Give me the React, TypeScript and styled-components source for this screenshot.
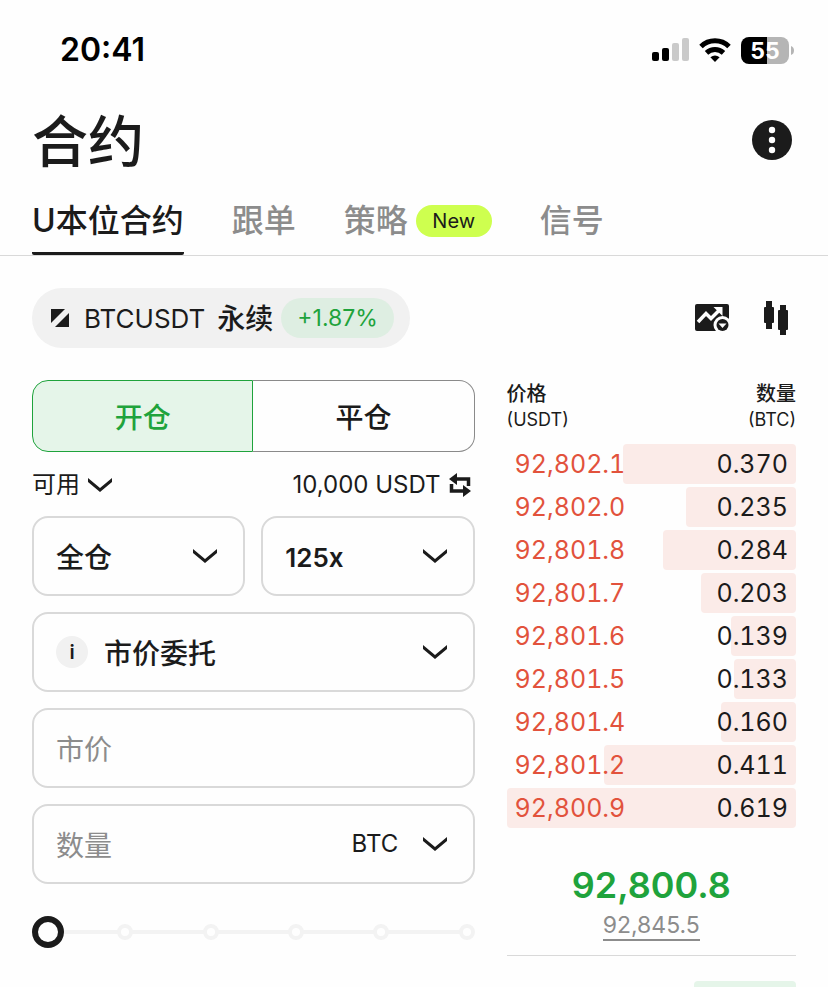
import React, { useState } from "react";
import styled, { createGlobalStyle, css } from "styled-components";

const INK = "#1b1b1b";
const MUTED = "#8c8c8c";
const GREEN = "#1fa33c";
const RED = "#e2523c";
const LINE = "#d9d9d9";

const GlobalStyle = createGlobalStyle`
  *, *::before, *::after { box-sizing: border-box; }
  body {
    margin: 0;
    background: #fefefe;
    color: ${INK};
    font-family: Inter, "Noto Sans CJK SC", sans-serif;
  }
  button, input, select {
    margin: 0;
    padding: 0;
    border: 0;
    background: none;
    color: inherit;
    font: inherit;
  }
  button, select { cursor: pointer; }
  svg { display: block; flex: none; }
`;

const Screen = styled.div`
  height: 100vh;
  overflow: hidden;
`;

const StatusBar = styled.div`
  display: flex;
  align-items: center;
  justify-content: space-between;
  height: 100px;
  padding: 0 34px 0 60px;
  color: #000;
`;

const Clock = styled.time`
  font-size: 32px;
  line-height: 40px;
  font-weight: 600;
`;

const StatusIcons = styled.div`
  display: flex;
  align-items: center;
  gap: 10px;
`;

const TitleBar = styled.header`
  display: flex;
  align-items: center;
  justify-content: space-between;
  height: 80px;
  padding: 0 36px 0 32px;
`;

const Title = styled.h1`
  margin: 0;
  padding-top: 4px;
  font-size: 56px;
  line-height: 80px;
  font-weight: 500;
`;

const IconButton = styled.button`
  display: flex;
  align-items: center;
  justify-content: center;
`;

const Tabs = styled.nav`
  display: flex;
  gap: 48px;
  height: 76px;
  padding: 0 32px;
  border-bottom: 1px solid ${LINE};
`;

const Tab = styled.a<{ $active?: boolean }>`
  display: flex;
  align-items: center;
  gap: 8px;
  padding-top: 10px;
  border-bottom: 3px solid ${(p) => (p.$active ? INK : "transparent")};
  border-radius: 2px;
  color: ${(p) => (p.$active ? INK : MUTED)};
  font-size: 32px;
  line-height: 40px;
  font-weight: 500;
  text-decoration: none;
  white-space: nowrap;
`;

const NewBadge = styled.span`
  width: 76px;
  border-radius: 16px;
  background: #ceff4f;
  color: ${INK};
  font-size: 20px;
  line-height: 32px;
  font-weight: 400;
  text-align: center;
`;

const PairBar = styled.div`
  display: flex;
  align-items: center;
  justify-content: space-between;
  padding: 32px 38px 32px 32px;
`;

const PairButton = styled.button`
  display: flex;
  align-items: center;
  height: 60px;
  padding: 0 16px 0 18px;
  border-radius: 30px;
  background: #f1f1f1;
  font-size: 28px;
  line-height: 40px;
`;

const PairName = styled.span`
  display: flex;
  gap: 12px;
  padding: 2px 8px 0 14px;
  font-weight: 500;
`;

const PairSymbol = styled.span`
  font-size: 26px;
  font-weight: 400;
`;

const Change = styled.span`
  padding: 0 16px;
  border-radius: 20px;
  background: #deeee2;
  color: ${GREEN};
  font-size: 23px;
  line-height: 40px;
`;

const Tools = styled.div`
  display: flex;
  align-items: center;
  gap: 35px;
`;

const Columns = styled.main`
  display: grid;
  grid-template-columns: 26fr 17fr;
  gap: 32px;
  padding: 0 32px;
`;

const Form = styled.form`
  display: flex;
  flex-direction: column;
  min-width: 0;
`;

const Segments = styled.div`
  display: grid;
  grid-template-columns: 1fr 1fr;
  height: 72px;
`;

const Segment = styled.button<{ $active: boolean }>`
  padding-top: 4px;
  border: 1px solid #8a8a8a;
  font-size: 28px;
  line-height: 40px;
  font-weight: 500;
  &:first-child { border-radius: 16px 0 0 16px; border-right-width: 0; }
  &:last-child { border-radius: 0 16px 16px 0; border-left-width: 0; }
  ${(p) =>
    p.$active &&
    css`
      && { border: 1px solid ${GREEN}; }
      background: #e5f5e9;
      color: ${GREEN};
    `}
`;

const AvailableRow = styled.div`
  display: flex;
  align-items: center;
  justify-content: space-between;
  height: 64px;
  padding: 2px 4px 0 0;
  font-size: 24px;
  line-height: 32px;
`;

const InlineButton = styled.button`
  display: flex;
  align-items: center;
  gap: 8px;
  font-weight: 400;
`;

const Fields = styled.div`
  display: grid;
  grid-template-columns: 1fr 1fr;
  gap: 16px;
`;

const Field = styled.div<{ $wide?: boolean }>`
  display: flex;
  align-items: center;
  gap: 16px;
  min-width: 0;
  height: 80px;
  padding: 0 26px 0 22px;
  border: 2px solid ${LINE};
  border-radius: 16px;
  font-size: 28px;
  line-height: 40px;
  ${(p) => p.$wide && css`grid-column: 1 / -1;`}
`;

const Picker = styled.div<{ $grow?: boolean; $kind: "text" | "number" | "unit" }>`
  display: grid;
  align-items: center;
  flex: ${(p) => (p.$grow ? "1" : "none")};
  min-width: 0;
  font-weight: ${(p) => ({ text: 500, number: 600, unit: 400 })[p.$kind]};
  font-size: ${(p) => ({ text: 28, number: 26, unit: 24 })[p.$kind]}px;

  select {
    grid-area: 1 / 1;
    width: 100%;
    height: 44px;
    padding: ${(p) => (p.$kind === "unit" ? 0 : 4)}px 48px 0 0;
    appearance: none;
    outline: none;
  }
  svg {
    grid-area: 1 / 1;
    justify-self: end;
    pointer-events: none;
  }
`;

const TextInput = styled.input`
  flex: 1;
  width: 0;
  min-width: 0;
  height: 44px;
  padding-top: 4px;
  outline: none;
  &::placeholder { color: ${MUTED}; opacity: 1; }
`;

const InfoButton = styled.button`
  width: 32px;
  height: 32px;
  border-radius: 50%;
  background: #f1f1f1;
  font-size: 20px;
  line-height: 32px;
  font-weight: 600;
  text-align: center;
`;

const Slider = styled.div`
  display: grid;
  align-items: center;
  margin-top: 32px;
`;

const Stops = styled.div`
  grid-area: 1 / 1;
  display: flex;
  align-items: center;
  justify-content: space-between;
  background: linear-gradient(#f3f3f3, #f3f3f3) center / calc(100% - 16px) 4px no-repeat;
`;

const Stop = styled.span`
  width: 16px;
  height: 16px;
  border: 4px solid #f3f3f3;
  border-radius: 50%;
  background: #fefefe;
`;

const Range = styled.input`
  grid-area: 1 / 1;
  z-index: 1;
  width: 100%;
  height: 32px;
  appearance: none;
  outline: none;
  &::-webkit-slider-runnable-track { height: 32px; background: none; }
  &::-webkit-slider-thumb {
    appearance: none;
    width: 32px;
    height: 32px;
    border: 6px solid ${INK};
    border-radius: 50%;
    background: #fefefe;
  }
`;

const Book = styled.section`
  display: flex;
  flex-direction: column;
  min-width: 0;
`;

const BookTable = styled.table`
  display: block;
  thead, tbody { display: block; }
  tbody { display: grid; gap: 3px; }
`;

const BookHead = styled.tr`
  display: flex;
  justify-content: space-between;
  padding: 2px 0 12px;
  th {
    padding: 0;
    font-size: 20px;
    line-height: 25px;
    font-weight: 500;
    text-align: left;
  }
  th:last-child { text-align: right; }
`;

const Unit = styled.span`
  display: block;
  font-size: 18px;
  font-weight: 400;
`;

const BookRow = styled.tr`
  position: relative;
  display: flex;
  justify-content: space-between;
  padding: 0 8px;
  font-size: 25px;
  line-height: 40px;
  font-variant-numeric: tabular-nums;
`;

const PriceCell = styled.td`
  position: relative;
  z-index: 1;
  padding: 0;
  color: ${RED};
`;

const AmountCell = styled.td`
  padding: 0;
`;

const Amount = styled.span`
  position: relative;
`;

const AskBar = styled.span`
  position: absolute;
  top: 0;
  right: 0;
  height: 100%;
  border-radius: 4px;
  background: #fbebe8;
`;

const Summary = styled.div`
  display: flex;
  flex-direction: column;
  align-items: center;
  padding: 37px 0 14px;
  border-bottom: 1px solid ${LINE};
`;

const LastPrice = styled.strong`
  color: ${GREEN};
  font-size: 36px;
  line-height: 40px;
  font-weight: 600;
`;

const MarkPrice = styled.a`
  margin-top: 6px;
  border-bottom: 2px solid ${MUTED};
  color: ${MUTED};
  font-size: 23px;
  line-height: 28px;
  text-decoration: none;
`;

const BidBar = styled.div`
  align-self: flex-end;
  height: 40px;
  margin-top: 25px;
  border-radius: 4px;
  background: #e5f5e9;
`;

const Chevron = () => (
  <svg width="24" height="14" viewBox="0 0 24 14" fill={INK} aria-hidden="true">
    <path d="M0 0 L12 10 L24 0 V4 L12 14 L0 4 Z" />
  </svg>
);

const SignalIcon = () => (
  <svg width="37" height="24" viewBox="0 0 37 24" aria-hidden="true">
    <rect x="0" y="14" width="7" height="9" rx="2" />
    <rect x="10" y="10" width="7" height="13" rx="2" />
    <rect x="20" y="5" width="7" height="18" rx="2" fill="#cacaca" />
    <rect x="30" y="0" width="7" height="23" rx="2" fill="#cacaca" />
  </svg>
);

const WifiIcon = () => (
  <svg width="32" height="24" viewBox="0 0 32 24" aria-hidden="true">
    <path d="M2 8.500 A20 20 0 0 1 30 8.500" fill="none" stroke="#000" strokeWidth="5" />
    <path d="M7.500 14.800 A12.500 12.500 0 0 1 24.500 14.800" fill="none" stroke="#000" strokeWidth="5" />
    <path d="M11.400 19.300 Q16 15.600 20.600 19.300 L16 24 Z" />
  </svg>
);

const BatteryIcon = () => (
  <svg width="53" height="27" viewBox="0 0 53 27" role="img" aria-label="55%">
    <path d="M26 0 H40 A8 8 0 0 1 48 8 V19 A8 8 0 0 1 40 27 H26 Z" fill="#b5b5b5" />
    <path d="M26 0 H8 A8 8 0 0 0 0 8 V19 A8 8 0 0 0 8 27 H26 Z" />
    <path d="M50 9 Q53 10 53 13.500 Q53 17 50 18 Z" fill="#b5b5b5" />
    <text x="24" y="22" textAnchor="middle" fill="#fff" fontSize="23" fontWeight="700">55</text>
  </svg>
);

const MoreIcon = () => (
  <svg width="40" height="40" viewBox="0 0 40 40" aria-hidden="true">
    <circle cx="20" cy="20" r="20" fill={INK} />
    <g fill="#fff">
      <circle cx="20" cy="10" r="3.2" />
      <circle cx="20" cy="20" r="3.2" />
      <circle cx="20" cy="30" r="3.2" />
    </g>
  </svg>
);

const PairIcon = () => (
  <svg width="20" height="20" viewBox="0 0 20 20" fill={INK} aria-hidden="true">
    <path d="M1 1 H15 L1 15 Z" />
    <path d="M19 5 V19 H5 Z" />
  </svg>
);

const ChartIcon = () => (
  <svg width="34" height="28" viewBox="0 0 34 28" aria-hidden="true">
    <rect x="0" y="0" width="34" height="27" rx="2" fill={INK} />
    <path d="M3 18 L11 9.500 L16 14.500 L24 6.500" fill="none" stroke="#fefefe" strokeWidth="3.500" />
    <path d="M18.500 3 H27.500 V12 Z" fill="#fefefe" />
    <circle cx="27.500" cy="21" r="9" fill="#fefefe" />
    <circle cx="27.500" cy="21" r="6" fill={INK} />
    <path d="M23.500 19.500 H31.500 L27.500 24 Z" fill="#fefefe" />
  </svg>
);

const CandlesIcon = () => (
  <svg width="26" height="34" viewBox="0 0 26 34" fill={INK} aria-hidden="true">
    <rect x="2" y="0" width="6" height="28" />
    <rect x="0" y="6" width="10" height="16" rx="1" />
    <rect x="16" y="4" width="6" height="30" />
    <rect x="14" y="9" width="10" height="20" rx="1" />
  </svg>
);

const SwapIcon = () => (
  <svg width="22" height="24" viewBox="0 0 22 24" aria-hidden="true">
    <g fill="none" stroke={INK} strokeWidth="3.500">
      <path d="M6 6 H19.500 V13" />
      <path d="M16 18 H2.500 V11" />
    </g>
    <path d="M0 6 L8 0 V12 Z M22 18 L14 12 V24 Z" fill={INK} />
  </svg>
);

const asks = [
  { price: "92,802.1", amount: "0.370" },
  { price: "92,802.0", amount: "0.235" },
  { price: "92,801.8", amount: "0.284" },
  { price: "92,801.7", amount: "0.203" },
  { price: "92,801.6", amount: "0.139" },
  { price: "92,801.5", amount: "0.133" },
  { price: "92,801.4", amount: "0.160" },
  { price: "92,801.2", amount: "0.411" },
  { price: "92,800.9", amount: "0.619" },
];
const deepest = Math.max(...asks.map((ask) => Number(ask.amount)));
const depth = (amount: number) => `${(amount / deepest) * 100}%`;

interface SelectBoxProps {
  label: string;
  value: string;
  grow?: boolean;
  kind: "text" | "number" | "unit";
}

const SelectBox = ({ label, value, grow, kind }: SelectBoxProps) => (
  <Picker $grow={grow} $kind={kind}>
    <select aria-label={label} defaultValue={value}>
      <option>{value}</option>
    </select>
    <Chevron />
  </Picker>
);

export default function App() {
  const [opening, setOpening] = useState(true);
  const [percent, setPercent] = useState(0);

  return (
    <>
      <GlobalStyle />
      <Screen lang="zh-CN">
        <StatusBar>
          <Clock>20:41</Clock>
          <StatusIcons>
            <SignalIcon />
            <WifiIcon />
            <BatteryIcon />
          </StatusIcons>
        </StatusBar>

        <TitleBar>
          <Title>合约</Title>
          <IconButton type="button" aria-label="更多"><MoreIcon /></IconButton>
        </TitleBar>

        <Tabs>
          <Tab href="#usdt" $active aria-current="page">U本位合约</Tab>
          <Tab href="#copy">跟单</Tab>
          <Tab href="#strategy">策略<NewBadge>New</NewBadge></Tab>
          <Tab href="#signals">信号</Tab>
        </Tabs>

        <PairBar>
          <PairButton type="button">
            <PairIcon />
            <PairName><PairSymbol>BTCUSDT</PairSymbol>永续</PairName>
            <Change>+1.87%</Change>
          </PairButton>
          <Tools>
            <IconButton type="button" aria-label="图表"><ChartIcon /></IconButton>
            <IconButton type="button" aria-label="K线"><CandlesIcon /></IconButton>
          </Tools>
        </PairBar>

        <Columns>
          <Form onSubmit={(event) => event.preventDefault()}>
            <Segments>
              <Segment type="button" $active={opening} aria-pressed={opening} onClick={() => setOpening(true)}>开仓</Segment>
              <Segment type="button" $active={!opening} aria-pressed={!opening} onClick={() => setOpening(false)}>平仓</Segment>
            </Segments>

            <AvailableRow>
              <InlineButton type="button">可用<Chevron /></InlineButton>
              <InlineButton type="button">10,000 USDT<SwapIcon /></InlineButton>
            </AvailableRow>

            <Fields>
              <Field><SelectBox label="保证金模式" value="全仓" kind="text" grow /></Field>
              <Field><SelectBox label="杠杆" value="125x" kind="number" grow /></Field>
              <Field $wide>
                <InfoButton type="button" aria-label="说明">i</InfoButton>
                <SelectBox label="委托类型" value="市价委托" kind="text" grow />
              </Field>
              <Field $wide><TextInput aria-label="价格" placeholder="市价" /></Field>
              <Field $wide>
                <TextInput aria-label="数量" placeholder="数量" />
                <SelectBox label="单位" value="BTC" kind="unit" />
              </Field>
            </Fields>

            <Slider>
              <Stops>
                {[0, 20, 40, 60, 80, 100].map((stop) => <Stop key={stop} />)}
              </Stops>
              <Range
                type="range"
                aria-label="仓位比例"
                min={0}
                max={100}
                value={percent}
                onChange={(event) => setPercent(Number(event.target.value))}
              />
            </Slider>
          </Form>

          <Book>
            <BookTable>
              <thead>
                <BookHead>
                  <th scope="col">价格<Unit>(USDT)</Unit></th>
                  <th scope="col">数量<Unit>(BTC)</Unit></th>
                </BookHead>
              </thead>
              <tbody>
                {asks.map((ask) => (
                  <BookRow key={ask.price}>
                    <PriceCell>{ask.price}</PriceCell>
                    <AmountCell>
                      <AskBar style={{ width: depth(Number(ask.amount)) }} />
                      <Amount>{ask.amount}</Amount>
                    </AmountCell>
                  </BookRow>
                ))}
              </tbody>
            </BookTable>
            <Summary>
              <LastPrice>92,800.8</LastPrice>
              <MarkPrice href="#mark">92,845.5</MarkPrice>
            </Summary>
            <BidBar style={{ width: depth(0.218) }} />
          </Book>
        </Columns>
      </Screen>
    </>
  );
}
